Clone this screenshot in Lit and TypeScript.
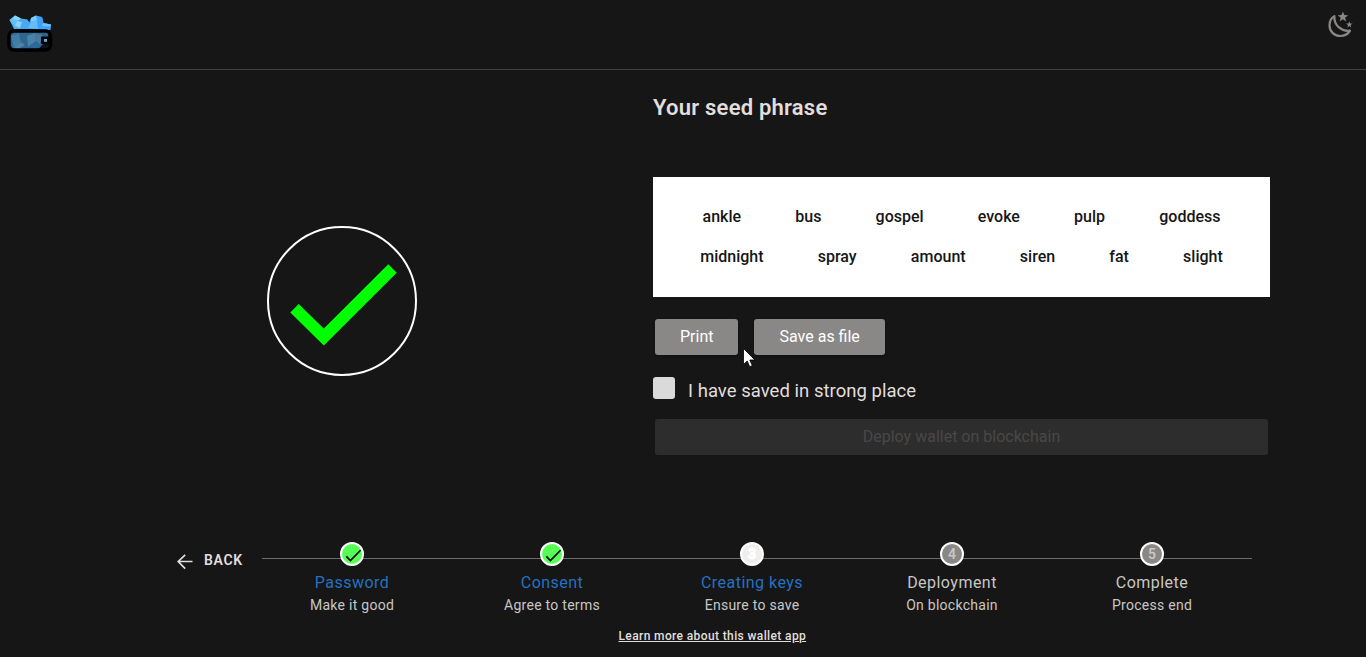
import { LitElement, html, css, svg } from "lit";
import { customElement, property } from "lit/decorators.js";
import { classMap } from "lit/directives/class-map.js";

type StepState = "done" | "active" | "pending";

interface Step {
  title: string;
  note: string;
  state: StepState;
}

const STEPS: Step[] = [
  { title: "Password", note: "Make it good", state: "done" },
  { title: "Consent", note: "Agree to terms", state: "done" },
  { title: "Creating keys", note: "Ensure to save", state: "active" },
  { title: "Deployment", note: "On blockchain", state: "pending" },
  { title: "Complete", note: "Process end", state: "pending" },
];

const SEED: string[][] = [
  ["ankle", "bus", "gospel", "evoke", "pulp", "goddess"],
  ["midnight", "spray", "amount", "siren", "fat", "slight"],
];

const gems = svg`
  <polygon points="2.500,6 8,1.500 14,4.500 20,5.500 23,9 21,15 7,15" fill="#4aaef5"/>
  <polygon points="2.500,6 8,1.500 12,6 8,12" fill="#62c3fb"/>
  <polygon points="12,6 20,5.500 22,9 18,15 10,12" fill="#4ba8f0"/>
  <polygon points="8,1.500 14,4.500 12,6 6,5" fill="#8fd5fb"/>
  <polygon points="10,7 15,8 13,14 8,12" fill="#8fd0f5"/>
  <polygon points="22,9 24,4 29,1.500 35,3 36.500,9 44,10.500 43.500,16 20,15" fill="#3fa5fa"/>
  <polygon points="24,4 29,1.500 30,6 24,8" fill="#7fcbfb"/>
  <polygon points="30,6 35,3 36.500,9 32,15" fill="#3ea0f8"/>
  <polygon points="24,8 30,6 31,15 21,14" fill="#62bdf8"/>
  <polygon points="36.500,9 44,10.500 43.500,12.500 35,12" fill="#6cc2fb"/>
`;

@customElement("wallet-header")
export class WalletHeader extends LitElement {
  static styles = css`
    :host {
      display: flex;
      justify-content: space-between;
      align-items: flex-start;
      box-sizing: border-box;
      height: 70px;
      padding: 14px 12px 0 7px;
      border-bottom: 1px solid #434343;
    }
    .logo,
    .moon {
      display: block;
    }
    .moon {
      margin-top: -3px;
    }
  `;

  render() {
    return html`
      <svg class="logo" width="46" height="40" viewBox="0 0 46 40">
        ${gems}
        <rect x="2" y="17" width="41.500" height="19" rx="5" fill="#12202b" />
        <path d="M3 20 5 18H41V23L36 31 31 35H6L3 31Z" fill="#2f6690" />
        <path d="M4 22 12 19 14 28 7 34Z" fill="#3f7ca6" />
        <path d="M12 19 19 18 21 22 14 28Z" fill="#31658c" />
        <path d="M7 34 14 28 18 31 11 35Z" fill="#4d83a6" />
        <path d="M20 22 28 19 29 27 21 33Z" fill="#4b82a6" />
        <path d="M28 19 35 21 33 31 29 27Z" fill="#477a9b" />
        <path d="M21 33 29 27 33 31 29 35Z" fill="#286a9c" />
        <rect x="34" y="22.500" width="8" height="7.500" rx="1" fill="#000" />
        <rect x="37" y="25" width="3" height="2.800" fill="#55afe5" />
        <path d="M36 30H42V35H32Z" fill="#101214" />
        <rect x="2" y="17" width="41.500" height="19" rx="5" fill="none" stroke="#000" stroke-width="3.500" />
      </svg>
      <svg class="moon" width="26" height="28" viewBox="0 0 26 28">
        <path
          d="M6.400 5.100C2.700 7.100 1.500 10.600 1.500 14.200C1.500 20.300 6.200 25 12 25C16.600 25 20.300 22.700 22 19.600C14 20.800 5.800 14.800 6.400 5.100Z"
          fill="none"
          stroke="#8a8886"
          stroke-width="2.200"
          stroke-linejoin="round"
        />
        <path
          d="M14.900.5 16.300 4.100 20.100 4.300 17.100 6.700 18.200 10.400 14.900 8.300 11.600 10.400 12.700 6.700 9.700 4.300 13.500 4.100ZM21.300 10.200 22.100 12.500 24.600 12.600 22.600 14.100 23.300 16.500 21.300 15.100 19.300 16.500 20 14.100 18 12.600 20.500 12.500Z"
          fill="#8a8886"
        />
      </svg>
    `;
  }
}

@customElement("wallet-stepper")
export class WalletStepper extends LitElement {
  @property({ attribute: false }) steps: Step[] = [];

  static styles = css`
    :host {
      display: grid;
      grid-template-columns: repeat(5, 200px);
      width: 990px;
      background: linear-gradient(#6b6b6a, #6b6b6a) 0 16px / 990px 1px no-repeat;
    }
    .step {
      display: flex;
      flex-direction: column;
      align-items: center;
      width: 180px;
      text-align: center;
      color: #c8c6c4;
    }
    .dot {
      display: flex;
      align-items: center;
      justify-content: center;
      box-sizing: border-box;
      width: 24px;
      height: 24px;
      border: 2px solid #fff;
      border-radius: 50%;
      background: #8a8886;
      font-size: 14px;
      font-weight: 600;
      line-height: 20px;
      color: #c8c6c4;
    }
    .done .dot {
      background: #55ff55;
    }
    .active .dot {
      background: #f0eded;
      color: #fff;
      font-weight: 900;
      -webkit-text-stroke: 0.8px #fff;
    }
    .tick {
      width: 20px;
      height: 20px;
    }
    .title {
      margin-top: 7px;
      font-size: 16px;
      line-height: 20px;
      letter-spacing: 0.47px;
      white-space: nowrap;
    }
    .done .title,
    .active .title {
      color: #2472c0;
    }
    .note {
      margin-top: 2px;
      font-size: 14px;
      line-height: 20px;
      letter-spacing: 0.27px;
    }
  `;

  render() {
    return this.steps.map(
      (s, i) => html`
        <div class=${classMap({ step: true, [s.state]: true })}>
          <div class="dot">
            ${s.state === "done"
              ? html`<svg class="tick" viewBox="0 0 20 20">
                  <path d="M4.300 12.400 8.400 16.500 18.600 6.300" fill="none" stroke="#000" stroke-width="1.6" />
                </svg>`
              : i + 1}
          </div>
          <div class="title">${s.title}</div>
          <div class="note">${s.note}</div>
        </div>
      `
    );
  }
}

@customElement("app-root")
export class AppRoot extends LitElement {
  static styles = css`
    :host {
      display: flex;
      flex-direction: column;
      position: relative;
      box-sizing: border-box;
      width: 100%;
      height: 657px;
      overflow: hidden;
      background: #161616;
      color: #e1dfdd;
      font-family: Roboto, "Liberation Sans", sans-serif;
    }
    .main {
      display: grid;
      grid-template-columns: 653px 617px;
      height: 472px;
    }
    .visual {
      padding: 156px 0 0 267px;
    }
    .badge {
      display: block;
    }
    .heading {
      margin: 24px 0 0;
      font-size: 22px;
      line-height: 28px;
      font-weight: 600;
      letter-spacing: 0.22px;
    }
    .seed {
      display: flex;
      flex-direction: column;
      box-sizing: border-box;
      height: 120px;
      margin-top: 55px;
      padding-top: 20px;
      background: #fff;
      color: #161616;
    }
    .row {
      display: flex;
      justify-content: center;
      gap: 54.2px;
      font-size: 16px;
      font-weight: 550;
      line-height: 40px;
    }
    .actions {
      display: flex;
      gap: 16px;
      padding: 22px 2px 0;
    }
    .btn {
      height: 36px;
      padding: 0 25px 1px;
      border: 0;
      border-radius: 3px;
      background: #8a8886;
      color: #fff;
      font: 400 16px/35px Roboto, sans-serif;
      box-shadow: 0 1px 3px rgba(0, 0, 0, 0.35);
    }
    .wide {
      width: 613px;
      margin: 18px 2px 0;
      background: #2d2d2d;
      color: #494847;
      box-shadow: none;
    }
    .confirm {
      display: flex;
      gap: 13px;
      height: 24px;
      margin-top: 22px;
      font-size: 18.5px;
      line-height: 29px;
      letter-spacing: 0.03px;
    }
    .box {
      width: 22px;
      height: 22px;
      border-radius: 3px;
      background: #dadada;
    }
    .footer {
      display: flex;
      align-items: flex-start;
      height: 83px;
      padding-left: 177px;
    }
    .back {
      display: flex;
      gap: 11px;
      width: 85px;
      padding-top: 8px;
      font-size: 14px;
      line-height: 20px;
      font-weight: 600;
      letter-spacing: 0.7px;
    }
    .arrow {
      margin-top: 4px;
    }
    .more {
      align-self: flex-start;
      margin: 3px 0 0 618.5px;
      font-size: 12px;
      font-weight: 500;
      line-height: 16px;
      letter-spacing: 0.38px;
      color: #e1dfdd;
      text-decoration: underline;
    }
    .cursor {
      position: absolute;
      left: 743px;
      top: 348px;
    }
  `;

  render() {
    return html`
      <wallet-header></wallet-header>
      <div class="main">
        <div class="visual">
          <svg class="badge" width="150" height="150" viewBox="0 0 150 150">
            <circle cx="75" cy="75" r="74" fill="none" stroke="#fff" stroke-width="2" />
            <path d="M27.500 82.300 56.800 111 125.500 42.500" fill="none" stroke="#00ff00" stroke-width="12" />
          </svg>
        </div>
        <div class="panel">
          <h1 class="heading">Your seed phrase</h1>
          <div class="seed">
            ${SEED.map(
              (words) => html`<div class="row">${words.map((w) => html`<span>${w}</span>`)}</div>`
            )}
          </div>
          <div class="actions">
            <button class="btn">Print</button>
            <button class="btn">Save as file</button>
          </div>
          <div class="confirm"><span class="box"></span><span>I have saved in strong place</span></div>
          <button class="btn wide" disabled>Deploy wallet on blockchain</button>
        </div>
      </div>
      <div class="footer">
        <div class="back">
          <svg class="arrow" width="16" height="16" viewBox="0 0 16 16">
            <path d="M8.200.8 1.200 7.500 8.200 14.700M1.200 7.500H15.500" fill="none" stroke="#e1dfdd" stroke-width="1.700" />
          </svg>
          <span>BACK</span>
        </div>
        <wallet-stepper .steps=${STEPS}></wallet-stepper>
      </div>
      <a class="more">Learn more about this wallet app</a>
      <svg class="cursor" width="13" height="20" viewBox="0 0 13 20">
        <path d="M.5.5V16.500L4.200 13 6.700 18.700 9.300 17.500 6.800 12H12Z" fill="#fff" stroke="#000" stroke-width=".8" />
      </svg>
    `;
  }
}
